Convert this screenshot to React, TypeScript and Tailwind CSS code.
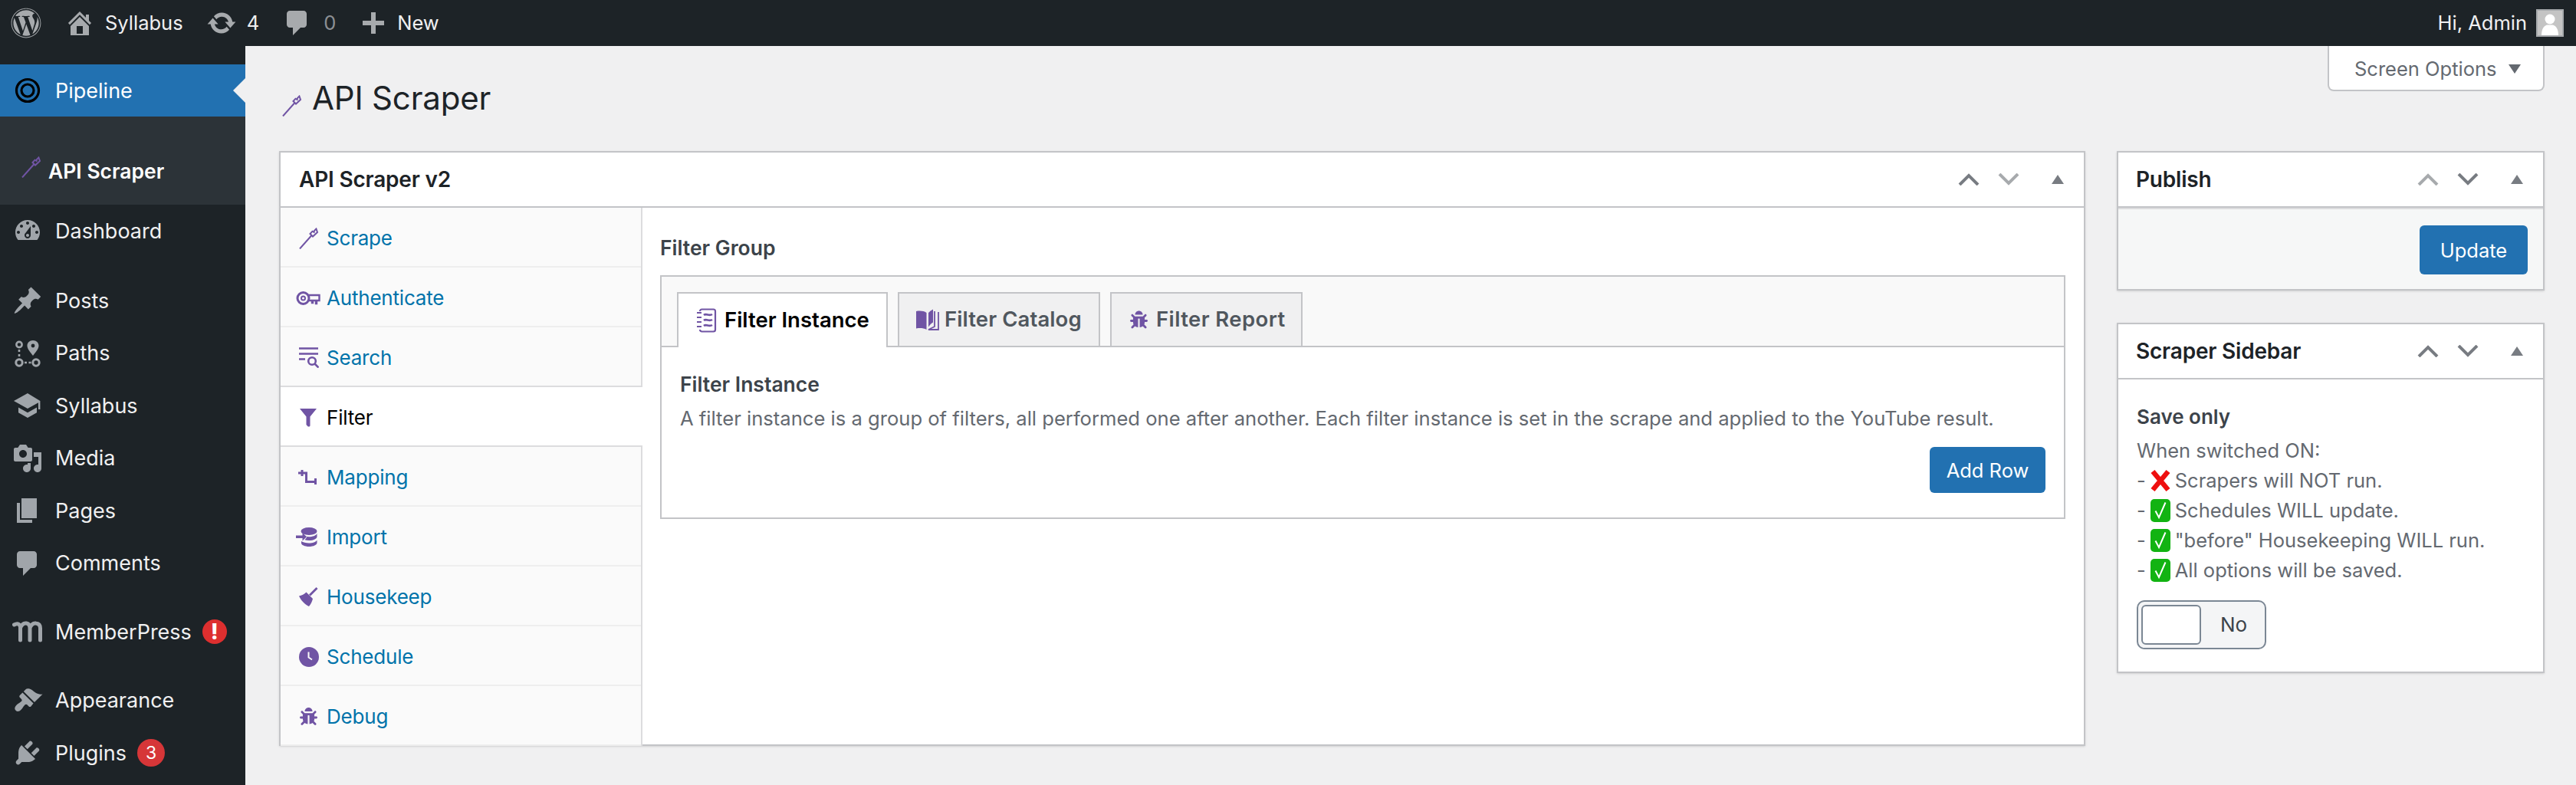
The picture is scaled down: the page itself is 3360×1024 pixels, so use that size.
import React from "react";
import { FaWordpress, FaBug } from "react-icons/fa";

const P: Record<string, string> = {
  home: "M16 8.5l1.53 1.53-1.06 1.06L10 4.62l-6.47 6.47-1.06-1.06L10 2.5l4 4v-2h2v4zm-6-2.46l6 5.99V18H4v-5.97zM12 17v-5H8v5h4z",
  update: "M10.2 3.28c3.53 0 6.43 2.61 6.92 6h2.08l-3.5 4-3.5-4h2.32c-.45-1.97-2.21-3.45-4.32-3.45-1.45 0-2.73.71-3.54 1.78L4.95 5.66C6.23 4.2 8.11 3.28 10.2 3.28zm-.4 13.44c-3.52 0-6.43-2.61-6.92-6H.8l3.5-4c1.17 1.33 2.33 2.67 3.5 4H5.48c.45 1.97 2.21 3.45 4.32 3.45 1.45 0 2.73-.71 3.54-1.78l1.71 1.95c-1.28 1.46-3.15 2.38-5.25 2.38z",
  comment: "M5 2h9c1.1 0 2 .9 2 2v7c0 1.1-.9 2-2 2h-2l-5 5v-5H5c-1.1 0-2-.9-2-2V4c0-1.1.9-2 2-2z",
  plus: "M17 8.5v3h-5.5V17h-3v-5.5H3v-3h5.5V3h3v5.5H17z",
  dashboard: "M3.76 16h12.48c1.1-1.37 1.76-3.11 1.76-5 0-4.42-3.58-8-8-8s-8 3.58-8 8c0 1.89.66 3.63 1.76 5zM10 4c.55 0 1 .45 1 1s-.45 1-1 1-1-.45-1-1 .45-1 1-1zM6 6c.55 0 1 .45 1 1s-.45 1-1 1-1-.45-1-1 .45-1 1-1zm8 0c.55 0 1 .45 1 1s-.45 1-1 1-1-.45-1-1 .45-1 1-1zm-5.37 5.55L12 7v6c0 1.1-.9 2-2 2s-2-.9-2-2c0-.57.24-1.08.63-1.45zM4 10c.55 0 1 .45 1 1s-.45 1-1 1-1-.45-1-1 .45-1 1-1zm12 0c.55 0 1 .45 1 1s-.45 1-1 1-1-.45-1-1 .45-1 1-1zm-5 3c0-.55-.45-1-1-1s-1 .45-1 1 .45 1 1 1 1-.45 1-1z",
  post: "M10.44 3.02l1.82-1.82 6.36 6.35-1.83 1.82c-1.05-.68-2.48-.57-3.41.36l-.75.75c-.92.93-1.04 2.35-.35 3.41l-1.83 1.82-2.41-2.41-2.8 2.79c-.42.42-3.38 2.71-3.8 2.29s1.86-3.39 2.28-3.81l2.79-2.79L4.1 9.36l1.83-1.82c1.05.69 2.48.57 3.4-.36l.75-.75c.93-.92 1.05-2.35.36-3.41z",
  media: "M13 11V4c0-.55-.45-1-1-1h-1.67L9 1H5L3.67 3H2c-.55 0-1 .45-1 1v7c0 .55.45 1 1 1h10c.55 0 1-.45 1-1zM7 4.5c1.38 0 2.5 1.12 2.5 2.5S8.38 9.5 7 9.5 4.5 8.38 4.5 7 5.62 4.5 7 4.5zM14 6h5v10.5c0 1.38-1.12 2.5-2.5 2.5S14 17.88 14 16.5s1.12-2.5 2.5-2.5c.17 0 .34.02.5.05V9h-3V6zm-4 8.05V13h2v3.5c0 1.38-1.12 2.5-2.5 2.5S7 17.88 7 16.5 8.12 14 9.5 14c.17 0 .34.02.5.05z",
  page: "M6 15V2h10v13H6zm-1 1h8v2H3V5h2v11z",
  education: "M10 2L1 7l9 5 7-3.9v4.4h1.2V7L10 2zM4 11.2v3.4L10 18l6-3.4v-3.4L10 14.6 4 11.2z",
  appearance: "M14.48 11.06L7.41 3.99l1.5-1.5c.5-.56 2.3-.47 3.51.32 1.21.8 1.43 1.28 2.91 2.1 1.18.64 2.45 1.26 4.45.85zm-.71.71L6.7 4.7 4.93 6.47c-.39.39-.39 1.02 0 1.41l1.06 1.06c.39.39.39 1.03 0 1.42-.6.6-1.43 1.11-2.21 1.69-.35.26-.7.53-1.01.84-1.34 1.34-1.38 2.63-.5 3.51s2.17.84 3.51-.5c.31-.31.58-.66.84-1.01.58-.78 1.09-1.61 1.69-2.21.39-.39 1.02-.39 1.41 0l1.06 1.06c.39.39 1.02.39 1.41 0z",
  plugins: "M13.11 4.36L9.87 7.6 8 5.73l3.24-3.24c.35-.34 1.05-.2 1.56.32.52.51.66 1.21.31 1.55zm-8 1.77l.91-1.12 9.01 9.01-1.19.84c-.71.71-2.63 1.16-3.82 1.16H6.14L4.9 17.26c-.59.59-1.54.59-2.12 0-.59-.58-.59-1.53 0-2.12l1.24-1.24v-3.88c0-1.13.4-3.19 1.09-3.89zm7.26 3.97l3.24-3.24c.34-.35 1.04-.21 1.55.31.52.51.66 1.21.31 1.55l-3.24 3.25z",
};

function D({ name, className }: { name: string; className?: string }) {
  return (
    <svg viewBox="0 0 20 20" className={className ?? "w-[40px] h-[40px]"} fill="currentColor">
      <path d={P[name]} />
    </svg>
  );
}

function PathsIcon() {
  return (
    <svg viewBox="0 0 40 40" className="w-[40px] h-[40px]" fill="none" stroke="currentColor">
      <circle cx="9" cy="8.5" r="3.6" strokeWidth="2.6" />
      <path d="M27 3c4.4 0 7.5 3.2 7.5 7 0 4.2-4.5 9-7.5 13-3-4-7.5-8.800-7.500-13 0-3.800 3.100-7 7.500-7z" fill="currentColor" stroke="none" />
      <circle cx="27" cy="10" r="2.400" fill="#1d2327" stroke="none" />
      <circle cx="9" cy="32" r="4.200" strokeWidth="3" />
      <circle cx="31" cy="32" r="4.200" strokeWidth="3" />
      <path d="M9 15v11" strokeWidth="2.600" strokeDasharray="3 3" />
      <path d="M16 32h9" strokeWidth="2.600" strokeDasharray="3 2.500" />
    </svg>
  );
}

function MPIcon() {
  return (
    <svg viewBox="0 0 40 28" className="w-[40px] h-[28px]" fill="none" stroke="currentColor" strokeWidth="5" strokeLinecap="round">
      <path d="M2.500 5C6 3 9.500 3 10.500 8v17M10.500 9c2-5 5-6.500 8-6 3 .5 4.500 3 4.500 6.500V25M23 9c2-5 5-6.500 8-6 3.500.5 5.500 3 5.500 6.500V25" />
    </svg>
  );
}

function Wand({ className }: { className: string }) {
  return (
    <svg viewBox="0 0 26 28" className={className} fill="none" stroke="#7054a4" strokeWidth="2">
      <path d="M1 27.500 16.500 10" />
      <path d="M14.500 8 18 11.500l6-5.500-1.600-4.500-2.400 2.400-.4 2-2.100-1.200z" />
    </svg>
  );
}

function NavIcon({ kind }: { kind: string }) {
  const c = "#7054a4";
  if (kind === "Scrape") return <Wand className="w-[26px] h-[28px] ml-[6px]" />;
  if (kind === "Authenticate")
    return (
      <svg viewBox="0 0 32 20" className="w-[32px] h-[20px] ml-[2px]" fill="none" stroke={c}>
        <circle cx="9.500" cy="10" r="7.500" strokeWidth="3" />
        <circle cx="9.500" cy="10" r="2.500" strokeWidth="2" />
        <path d="M16 6h14.500v7h-3.500v4h-1v-4h-4v3h-1v-3h-5" strokeWidth="2.400" />
      </svg>
    );
  if (kind === "Search")
    return (
      <svg viewBox="0 0 26 27" className="w-[26px] h-[27px] ml-[6px]" fill="none" stroke={c} strokeWidth="2.600">
        <path d="M0 1.500h25M0 8.500h25M0 15.500h8" />
        <circle cx="17" cy="18" r="4.800" />
        <path d="m20.500 21.500 5 5" />
      </svg>
    );
  if (kind === "Filter")
    return (
      <svg viewBox="0 0 22 24" className="w-[22px] h-[24px] ml-[7px]" fill={c}>
        <path d="M0 0h22l-8.500 10.500V22c0 1.500-2 2-3 1.200L8.500 21V10.500z" />
      </svg>
    );
  if (kind === "Mapping")
    return (
      <svg viewBox="0 0 26 20" className="w-[26px] h-[20px] ml-[5px]" fill="none" stroke={c} strokeWidth="3">
        <path d="M0 4h10.500v11.500H23M5 0v8M22.500 11v8" />
      </svg>
    );
  if (kind === "Import")
    return (
      <svg viewBox="0 0 28 25" className="w-[28px] h-[25px] ml-[2px]" fill={c}>
        <ellipse cx="17" cy="5" rx="10.500" ry="5" />
        <path d="M13 11.800c1.200.2 2.600.4 4 .4 5 0 9-1.400 10.500-4.200v4c0 2.900-4.500 5-10.500 5-2 0-3.800-.2-5.500-.7L14.500 12.500zM7 18c2.200 1.400 6.400 2.400 10 2.400 4.800 0 8.800-1.400 10.500-3.700v3.300c0 2.800-4.700 5-10.500 5-5.600 0-10-2.300-10-4.500z" />
        <path d="M0 10.500h8.500V7l5.500 5.200-5.500 5.300v-3.500H0z" />
      </svg>
    );
  if (kind === "Housekeep")
    return (
      <svg viewBox="0 0 25 25" className="w-[25px] h-[25px] ml-[6px]" fill={c}>
        <path d="M23.500 1 14 10.500" fill="none" stroke={c} strokeWidth="2.800" />
        <path d="M9.500 6.500 18 15c-.8 3.500-2.500 7-5 10C8 23 2.500 17 0 11.500c3.500-.5 7-2.500 9.500-5z" />
      </svg>
    );
  if (kind === "Schedule")
    return (
      <svg viewBox="0 0 26 26" className="w-[26px] h-[26px] ml-[6px]">
        <circle cx="13" cy="13" r="13" fill={c} />
        <path d="M12.500 6.500v7l4.500 3" fill="none" stroke="#fafafa" strokeWidth="2" />
      </svg>
    );
  return <FaBug className="w-[23px] h-[23px] ml-[7px]" color={c} />;
}

const NAV = ["Scrape", "Authenticate", "Search", "Filter", "Mapping", "Import", "Housekeep", "Schedule", "Debug"];

function Chevron({ up, light }: { up?: boolean; light?: boolean }) {
  return (
    <svg viewBox="0 0 28 16" className={`w-[28px] h-[16px] ${light ? "text-[#a7aaad]" : "text-[#787c82]"}`} fill="none" stroke="currentColor" strokeWidth="4">
      <path d={up ? "M2 15 14 3l12 12" : "M2 1l12 12L26 1"} />
    </svg>
  );
}

function BoxControls({ upLight, downLight }: { upLight?: boolean; downLight?: boolean }) {
  return (
    <div className="flex items-center gap-[24px]">
      <Chevron up light={upLight} />
      <Chevron light={downLight} />
      <svg viewBox="0 0 16 12" className="w-[16px] h-[12px] ml-[18px] text-[#787c82]" fill="currentColor">
        <path d="M8 0l8 12H0z" />
      </svg>
    </div>
  );
}

function Check() {
  return (
    <svg viewBox="0 0 26 30" className="w-[26px] h-[30px] mx-[6px] shrink-0">
      <rect x="0" y="0" width="26" height="30" rx="5" fill="#12b312" />
      <path d="M6.500 15.500 11 24 19.500 4.500" fill="none" stroke="#fff" strokeWidth="2" />
    </svg>
  );
}

function Cross() {
  return (
    <svg viewBox="0 0 26 30" className="w-[26px] h-[30px] mx-[6px] shrink-0">
      <path d="M3 3l20 24M23 3 3 27" fill="none" stroke="#ee0f0f" strokeWidth="6.500" />
    </svg>
  );
}

function Row({ icon, label, tail, cls }: { icon: React.ReactNode; label: string; tail?: React.ReactNode; cls?: string }) {
  return (
    <div className={`flex items-center h-[68.5px] pl-[16px] text-[#f0f0f1] text-[27px] ${cls ?? ""}`}>
      <span className="w-[40px] h-[40px] flex items-center justify-center text-[#a0a5aa] shrink-0">{icon}</span>
      <span className="ml-[16px]">{label}</span>
      {tail}
    </div>
  );
}

const navBase = "h-[78px] flex items-center pl-[18px] pt-[3px]";

export default function App() {
  return (
    <div className="w-[3360px] h-[1024px] overflow-hidden flex flex-col bg-[#f0f0f1] font-['Inter',sans-serif] text-[26px] leading-none">
      <header className="h-[60px] bg-[#1d2327] flex items-center text-[#f0f0f1] shrink-0 z-10 text-[25.500px]">
        <FaWordpress className="w-[40px] h-[40px] ml-[14px] text-[#a7aaad]" />
        <span className="ml-[30px] text-[#a7aaad]"><D name="home" /></span>
        <span className="ml-[13px]">Syllabus</span>
        <span className="ml-[30px] text-[#a7aaad]"><D name="update" /></span>
        <span className="ml-[13px]">4</span>
        <span className="ml-[30px] text-[#a7aaad]"><D name="comment" /></span>
        <span className="ml-[14px] text-[#8c8f94]">0</span>
        <span className="ml-[29px] text-[#a7aaad]"><D name="plus" /></span>
        <span className="ml-[11px]">New</span>
        <span className="ml-auto">Hi, Admin</span>
        <span className="ml-[12px] mr-[16px] w-[36px] h-[36px] bg-[#c4c4c4] border-2 border-[#a7aaad] overflow-hidden">
          <svg viewBox="0 0 32 32" className="w-full h-full" fill="#fff">
            <circle cx="16" cy="11" r="6.500" />
            <path d="M5 32c0-8 3-12 7-13.500h8C24 20 27 24 27 32z" />
          </svg>
        </span>
      </header>

      <div className="flex flex-1 min-h-0">
        <aside className="w-[320px] bg-[#1d2327] pt-[24px] shrink-0">
          <div className="relative flex items-center h-[68px] bg-[#2271b1] pl-[16px] text-white text-[27px]">
            <svg viewBox="0 0 40 40" className="w-[40px] h-[40px]" fill="none" stroke="#000">
              <circle cx="20" cy="20" r="14.500" strokeWidth="3.200" />
              <circle cx="20" cy="20" r="8" strokeWidth="3.200" />
            </svg>
            <span className="ml-[16px]">Pipeline</span>
            <span className="absolute right-0 top-[18px] w-0 h-0 border-y-[16px] border-y-transparent border-r-[16px] border-r-[#f0f0f1]" />
          </div>
          <div className="h-[115px] bg-[#2c3338] pt-[52px] flex items-start pl-[28px] text-white font-semibold text-[26.500px]">
            <Wand className="w-[26px] h-[28px]" />
            <span className="ml-[9px] mt-[6px]">API Scraper</span>
          </div>
          <Row icon={<D name="dashboard" />} label="Dashboard" cls="mb-[22.500px]" />
          <Row icon={<D name="post" />} label="Posts" />
          <Row icon={<PathsIcon />} label="Paths" />
          <Row icon={<D name="education" />} label="Syllabus" />
          <Row icon={<D name="media" />} label="Media" />
          <Row icon={<D name="page" />} label="Pages" />
          <Row icon={<D name="comment" />} label="Comments" cls="mb-[21px]" />
          <Row
            icon={<MPIcon />}
            label="MemberPress"
            cls="mb-[21px]"
            tail={<span className="ml-[14px] w-[32px] h-[32px] rounded-full bg-[#dd2f2f] text-white flex items-center justify-center font-extrabold text-[28px]">!</span>}
          />
          <Row icon={<D name="appearance" />} label="Appearance" />
          <Row
            icon={<D name="plugins" />}
            label="Plugins"
            tail={<span className="ml-[14px] w-[36px] h-[36px] rounded-full bg-[#d63638] text-white flex items-center justify-center text-[23px]">3</span>}
          />
        </aside>

        <main className="flex-1 min-w-0 pl-[44px] pr-[41px]">
          <div className="flex justify-between items-start h-[137px]">
            <div className="flex items-center mt-[40px] h-[56px]">
              <Wand className="w-[26px] h-[28px] ml-[4px] mt-[19px]" />
              <h1 className="ml-[13px] text-[42px] text-[#1d2327] tracking-[-0.2px]">API Scraper</h1>
            </div>
            <button className="flex items-center w-[283px] h-[59px] pl-[33px] pt-[3px] bg-white border-2 border-t-0 border-[#c3c4c7] rounded-b-[8px] text-[#646970] text-[25.500px]">
              Screen Options
              <svg viewBox="0 0 16 12" className="w-[16px] h-[12px] ml-[15px]" fill="currentColor"><path d="M0 0h16L8 12z" /></svg>
            </button>
          </div>

          <div className="flex items-start gap-[41px]">
            <section className="flex-1 min-w-0 bg-white border-2 border-[#c3c4c7] shadow-sm">
              <div className="h-[72px] border-b-2 border-[#c3c4c7] flex items-center justify-between pl-[24px] pr-[26px]">
                <h2 className="font-semibold text-[#1d2327] text-[28px] tracking-[-0.2px]">API Scraper v2</h2>
                <BoxControls downLight />
              </div>
              <div className="flex">
                <nav className="w-[472px] shrink-0 -mb-[2px] bg-[#fafafa] border-r-2 border-[#dcdcde] relative">
                  {NAV.map((n) => (
                    <div
                      key={n}
                      className={
                        n === "Filter"
                          ? `${navBase} bg-white -mr-[2px] border-b-2 border-[#dcdcde] text-black relative`
                          : n === "Search"
                            ? `${navBase} border-b-2 border-[#dcdcde] text-[#0073aa]`
                            : `${navBase} border-b-2 border-[#eeeeee] text-[#0073aa]`
                      }
                    >
                      <span className="w-[36px] flex items-center">
                        <NavIcon kind={n} />
                      </span>
                      <span className="ml-[6px] tracking-[-0.2px]">{n}</span>
                    </div>
                  ))}
                </nav>
                <div className="flex-1 min-w-0 pl-[23px] pr-[24px]">
                  <div className="h-[88px] flex items-center pt-[17px] font-semibold text-[#3c434a] text-[26.500px]">Filter Group</div>
                  <div className="border-2 border-[#c3c4c7]">
                    <div className="h-[92px] bg-[#f9f9f9] border-b-2 border-[#c3c4c7] flex items-end pl-[20px] gap-[13px]">
                      <div className="h-[72px] w-[275px] -mb-[2px] bg-white border-2 border-b-0 border-[#c3c4c7] flex items-center pl-[24px] text-black font-semibold text-[27.500px]">
                        <svg viewBox="0 0 26 32" className="w-[26px] h-[32px]" fill="none" stroke="#7054a4" strokeWidth="2.200">
                          <path d="M4 4c0-1.500 1-2.500 2.500-2.500h15C23 1.500 24 2.500 24 4v24c0 1.500-1 2.500-2.500 2.500h-15C5 30.500 4 29.500 4 28" />
                          <path d="M0 6h6M0 12h6M0 18h6M0 24h6" />
                          <path d="M9 9c3.500-3 6.500 2 11-1M9 16c3.500-3 6.500 2 11-1M9 23c3.500-3 6.500 2 11-1" strokeWidth="2.600" />
                        </svg>
                        <span className="ml-[10px]">Filter Instance</span>
                      </div>
                      <div className="h-[70px] w-[264px] bg-[#f0f0f1] border-2 border-b-0 border-[#c3c4c7] flex items-center pl-[22px] text-[#50575e] font-semibold text-[27.500px]">
                        <svg viewBox="0 0 30 28" className="w-[30px] h-[28px]">
                          <path d="M0 3c5-1 10-.500 13.500 2v22C10 25 5 24.500 0 25.500z" fill="#7054a4" />
                          <path d="M16 5c1.500-1.500 3-3 6-4.500v17c-2 1-4 3-6 6z" fill="#7054a4" />
                          <path d="M24 3v20l-8 4h13V4" fill="none" stroke="#7054a4" strokeWidth="1.800" />
                        </svg>
                        <span className="ml-[7px] tracking-[0.1px]">Filter Catalog</span>
                      </div>
                      <div className="h-[70px] w-[251px] bg-[#f0f0f1] border-2 border-b-0 border-[#c3c4c7] flex items-center pl-[24px] text-[#50575e] font-semibold text-[27.500px]">
                        <FaBug className="w-[23px] h-[26px]" color="#7054a4" />
                        <span className="ml-[11px] tracking-[0.4px]">Filter Report</span>
                      </div>
                    </div>
                    <div className="h-[222px] px-[24px] pt-[35px]">
                      <h3 className="font-semibold text-[#3c434a] text-[26.500px]">Filter Instance</h3>
                      <p className="mt-[18px] text-[#646970] text-[25.600px]">
                        A filter instance is a group of filters, all performed one after another. Each filter instance is set in the scrape and applied to the YouTube result.
                      </p>
                      <div className="flex justify-end mt-[25px]">
                        <button className="w-[151px] h-[60px] rounded-[6px] bg-[#2271b1] text-white pt-[1px] text-[25.500px]">Add Row</button>
                      </div>
                    </div>
                  </div>
                </div>
              </div>
            </section>

            <div className="w-[558px] shrink-0 flex flex-col gap-[42px]">
              <section className="bg-white border-2 border-[#c3c4c7] shadow-sm">
                <div className="h-[72px] flex items-center justify-between pl-[23px] pr-[26px] border-b-2 border-[#c3c4c7]">
                  <h2 className="font-semibold text-[#1d2327] text-[28px] tracking-[-0.2px]">Publish</h2>
                  <BoxControls upLight />
                </div>
                <div className="h-[106px] bg-[#f6f7f7] border-t-2 border-[#dcdcde] flex justify-end pt-[21px] pr-[20px]">
                  <button className="w-[141px] h-[64px] rounded-[6px] bg-[#2271b1] text-white pt-[1px] text-[25.500px]">Update</button>
                </div>
              </section>
              <section className="bg-white border-2 border-[#c3c4c7] shadow-sm">
                <div className="h-[72px] flex items-center justify-between pl-[23px] pr-[26px] border-b-2 border-[#c3c4c7]">
                  <h2 className="font-semibold text-[#1d2327] text-[28px] tracking-[-0.2px]">Scraper Sidebar</h2>
                  <BoxControls />
                </div>
                <div className="h-[381px] px-[24px] pt-[36px]">
                  <h3 className="font-semibold text-[#3c434a] text-[26px]">Save only</h3>
                  <div className="mt-[11px] text-[#646970] text-[25.500px] leading-[39px]">
                    <div>When switched ON:</div>
                    <div className="flex items-center">-<Cross />Scrapers will NOT run.</div>
                    <div className="flex items-center">-<Check />Schedules WILL update.</div>
                    <div className="flex items-center">-<Check />"before" Housekeeping WILL run.</div>
                    <div className="flex items-center">-<Check />All options will be saved.</div>
                  </div>
                  <div className="mt-[20px] w-[169px] h-[64px] rounded-[10px] border-2 border-[#7b8794] bg-[#f4f5f6] flex items-center pl-[4px] text-[#3c434a]">
                    <span className="w-[78px] h-[52px] rounded-[6px] border-2 border-[#7b8794] bg-white" />
                    <span className="ml-[25px]">No</span>
                  </div>
                </div>
              </section>
            </div>
          </div>
        </main>
      </div>
    </div>
  );
}
